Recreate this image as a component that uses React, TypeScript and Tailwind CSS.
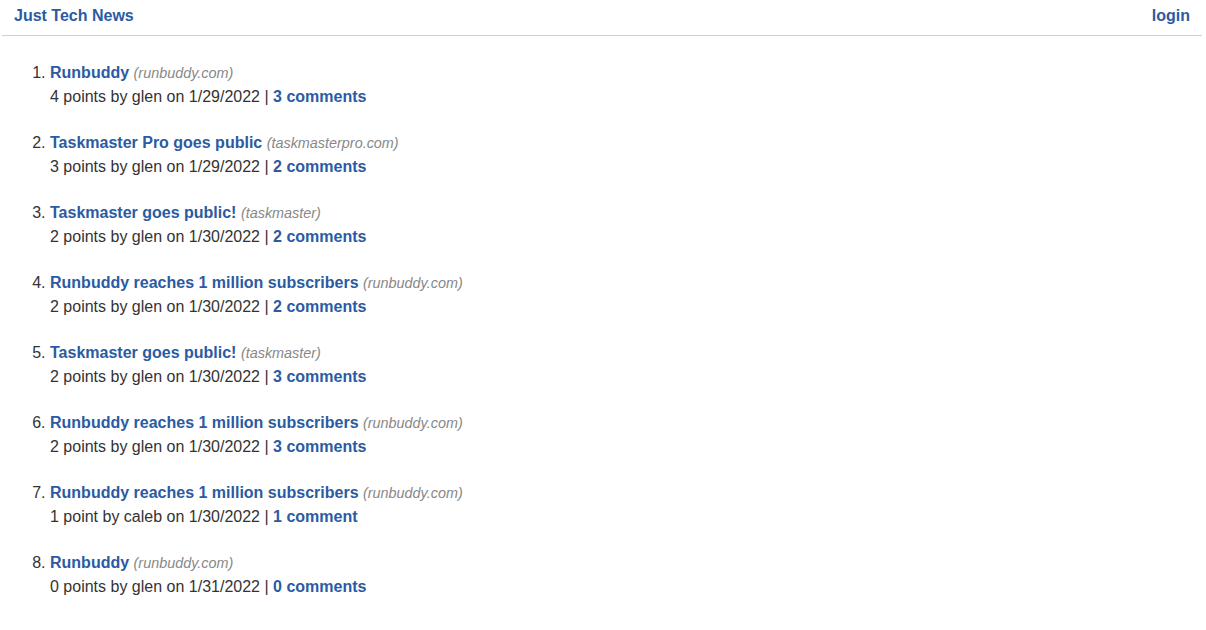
const posts = [
  { title: "Runbuddy", domain: "runbuddy.com", points: 4, user: "glen", date: "1/29/2022", comments: 3 },
  { title: "Taskmaster Pro goes public", domain: "taskmasterpro.com", points: 3, user: "glen", date: "1/29/2022", comments: 2 },
  { title: "Taskmaster goes public!", domain: "taskmaster", points: 2, user: "glen", date: "1/30/2022", comments: 2 },
  { title: "Runbuddy reaches 1 million subscribers", domain: "runbuddy.com", points: 2, user: "glen", date: "1/30/2022", comments: 2 },
  { title: "Taskmaster goes public!", domain: "taskmaster", points: 2, user: "glen", date: "1/30/2022", comments: 3 },
  { title: "Runbuddy reaches 1 million subscribers", domain: "runbuddy.com", points: 2, user: "glen", date: "1/30/2022", comments: 3 },
  { title: "Runbuddy reaches 1 million subscribers", domain: "runbuddy.com", points: 1, user: "caleb", date: "1/30/2022", comments: 1 },
  { title: "Runbuddy", domain: "runbuddy.com", points: 0, user: "glen", date: "1/31/2022", comments: 0 },
];

export default function App() {
  return (
    <div className="min-h-screen bg-white text-[#333] text-[16px] leading-6 font-['Liberation_Sans',Arial,sans-serif]">
      <header className="ml-[2px] mr-[4px] h-[36px] flex items-start justify-between pt-[4px] px-3 border-b border-[#d0d0d0]">
        <a href="#" className="font-bold text-[#2a5ba3]">Just Tech News</a>
        <a href="#" className="font-bold text-[#2a5ba3]">login</a>
      </header>

      <ol className="list-decimal pl-[50px] mt-[25px]">
        {posts.map((post, i) => (
          <li key={i} className="mb-[22px]">
            <a href="#" className="font-bold text-[#2a5ba3]">{post.title}</a>{" "}
            <span className="italic text-[0.9em] text-[#888]">({post.domain})</span>
            <div>
              {post.points} {post.points === 1 ? "point" : "points"} by {post.user} on {post.date} |{" "}
              <a href="#" className="font-bold text-[#2a5ba3]">
                {post.comments} {post.comments === 1 ? "comment" : "comments"}
              </a>
            </div>
          </li>
        ))}
      </ol>
    </div>
  );
}
